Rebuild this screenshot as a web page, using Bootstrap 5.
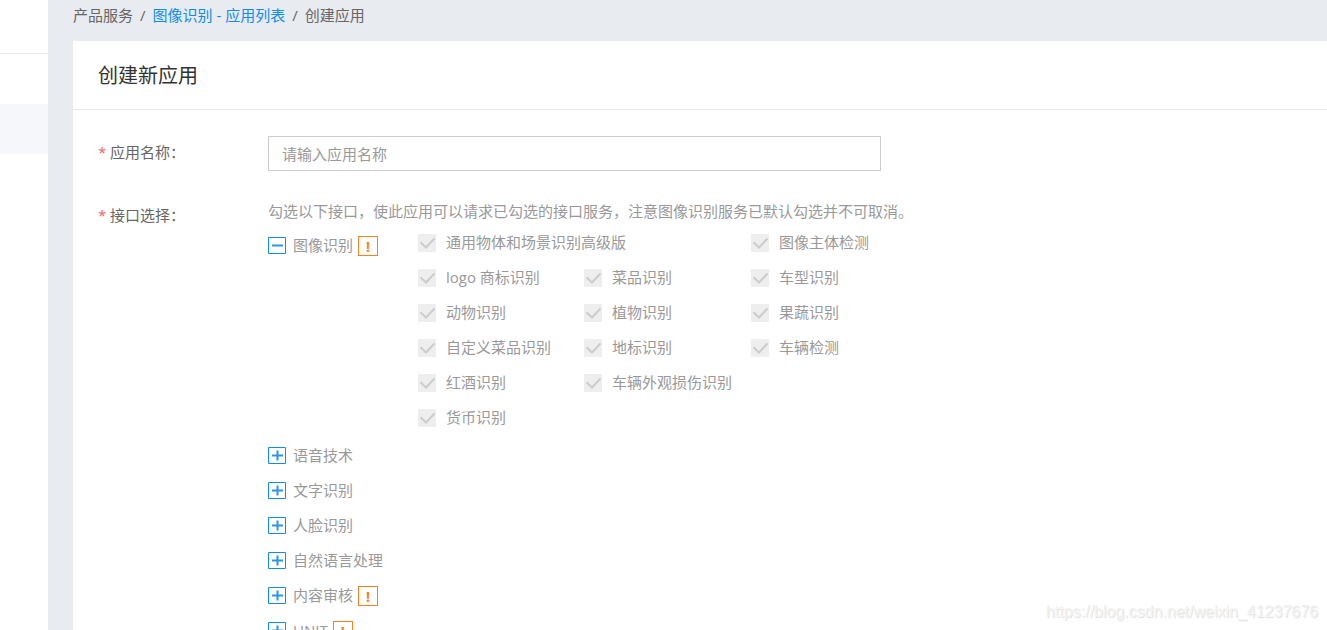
<!DOCTYPE html>
<html lang="zh-CN">
<head>
<meta charset="utf-8">
<meta name="viewport" content="width=device-width, initial-scale=1">
<title>创建新应用</title>
<link rel="stylesheet" href="https://cdn.jsdelivr.net/npm/bootstrap@5.3.0/dist/css/bootstrap.min.css">
<style>
body { background: #e8ebf0; color: #999; font-family: "Open Sans", "Noto Sans CJK SC", sans-serif; font-size: 15px; line-height: 30px; }
.shell { height: 100vh; }
.side-nav { width: 48px; }
.side-nav .side-logo { height: 54px; border-bottom: 1px solid #e8e8e8; }
.side-nav .side-item { height: 50px; }
.side-nav .side-item.active { background: #f6f7fb; }
.crumbs { --bs-breadcrumb-divider-color: #666; --bs-breadcrumb-item-padding-x: 7px; --bs-breadcrumb-item-active-color: #666; color: #666; height: 41px; }
.crumbs a { color: #108cee; text-decoration: none; }
.main-area { padding-left: 25px; }
.panel-title { font-size: 20px; line-height: 66px; font-weight: 400; color: #333; padding: 2px 25px 0; border-bottom: 1px solid #e8e8e8; }
.panel-form { padding: 26px 25px; }
.field-label { width: 170px; color: #666; line-height: 32px; }
.field-label .star { color: #f0616a; width: 12px; }
.name-input { width: 613px; height: 35px; padding: 0 13px; font-size: 15px; line-height: 33px; border: 1px solid #ccc; }
.name-input::placeholder { color: #999; }
.hint-text { line-height: 32px; }
.group-row { min-height: 35px; }
.group-head { width: 150px; height: 35px; }
.toggle-btn { width: 18px; height: 17px; margin: 2px 7px 0 0; }
.toggle-btn svg { display: block; }
.new-flag { width: 20px; height: 20px; margin: 2px 0 0 5px; border: 1px solid #f58220; color: #f58220; font: 700 14px/20px "Open Sans", sans-serif; text-align: center; }
.api-grid { display: grid; grid-template-columns: 166px 167px 167px; grid-auto-rows: 35px; }
.api-grid .form-check { min-height: 0; padding: 0; margin: 0; height: 30px; white-space: nowrap; }
.api-grid .wide-item { grid-column: span 2; }
.api-grid .form-check-input { width: 18px; height: 18px; margin: 2px 10px 0 0; float: none; border: 0; border-radius: 0; }
.api-grid .form-check-input:disabled,
.api-grid .form-check-input:disabled ~ .form-check-label { opacity: 1; }
.api-grid .form-check-input:checked { background-color: #eee; background-size: 18px 18px;
  background-image: url("data:image/svg+xml,%3csvg xmlns='http://www.w3.org/2000/svg' viewBox='0 0 18 18'%3e%3cpath d='M2.5 8.2 8 13.5 16.5 4.5' fill='none' stroke='%23ccc' stroke-width='2'/%3e%3c/svg%3e"); }
.watermark { right: 9px; bottom: 8px; font: 400 16px/20px "Liberation Sans", sans-serif; color: #f4f4f4; text-shadow: 1px 1px 1px #ddd; }
</style>
</head>
<body>
<svg class="d-none" aria-hidden="true">
  <symbol id="plus" viewBox="0 0 18 17"><path d="M.5.5h17v16H.5z" fill="none" stroke="#108cee"/><path d="M4 8.5h11M9.5 3.5v10" stroke="#2b95e9" stroke-width="2"/></symbol>
  <symbol id="minus" viewBox="0 0 18 17"><path d="M.5.5h17v16H.5z" fill="none" stroke="#108cee"/><path d="M4 8.5h11" stroke="#2b95e9" stroke-width="2"/></symbol>
</svg>
<div class="shell d-flex overflow-hidden position-relative">
  <aside class="side-nav bg-white flex-shrink-0">
    <div class="side-logo"></div>
    <div class="side-item"></div>
    <div class="side-item active"></div>
  </aside>
  <main class="main-area d-flex flex-column flex-grow-1">
    <nav aria-label="breadcrumb">
      <ol class="breadcrumb crumbs mb-0">
        <li class="breadcrumb-item">产品服务</li>
        <li class="breadcrumb-item"><a href="#">图像识别 - 应用列表</a></li>
        <li class="breadcrumb-item active" aria-current="page">创建应用</li>
      </ol>
    </nav>
    <section class="bg-white flex-grow-1">
      <h1 class="panel-title mb-0">创建新应用</h1>
      <form class="panel-form">
        <div class="d-flex mb-4">
          <label class="field-label d-flex flex-shrink-0" for="appName"><span class="star">*</span>应用名称：</label>
          <input type="text" class="form-control rounded-0 name-input" id="appName" placeholder="请输入应用名称">
        </div>
        <div class="d-flex">
          <div class="field-label d-flex flex-shrink-0 pt-1" id="apiLabel"><span class="star">*</span>接口选择：</div>
          <div role="group" aria-labelledby="apiLabel">
            <p class="hint-text mb-0">勾选以下接口，使此应用可以请求已勾选的接口服务，注意图像识别服务已默认勾选并不可取消。</p>
            <div class="group-row d-flex">
              <div class="group-head d-flex align-items-center flex-shrink-0">
                <button type="button" class="btn p-0 border-0 rounded-0 toggle-btn" aria-label="收起图像识别"><svg width="18" height="17"><use href="#minus"/></svg></button>图像识别<span class="new-flag">!</span>
              </div>
              <div class="api-grid">
                <div class="form-check d-flex align-items-center wide-item"><input class="form-check-input" type="checkbox" id="a1" checked disabled><label class="form-check-label" for="a1">通用物体和场景识别高级版</label></div>
                <div class="form-check d-flex align-items-center"><input class="form-check-input" type="checkbox" id="a2" checked disabled><label class="form-check-label" for="a2">图像主体检测</label></div>
                <div class="form-check d-flex align-items-center"><input class="form-check-input" type="checkbox" id="a3" checked disabled><label class="form-check-label" for="a3">logo 商标识别</label></div>
                <div class="form-check d-flex align-items-center"><input class="form-check-input" type="checkbox" id="a4" checked disabled><label class="form-check-label" for="a4">菜品识别</label></div>
                <div class="form-check d-flex align-items-center"><input class="form-check-input" type="checkbox" id="a5" checked disabled><label class="form-check-label" for="a5">车型识别</label></div>
                <div class="form-check d-flex align-items-center"><input class="form-check-input" type="checkbox" id="a6" checked disabled><label class="form-check-label" for="a6">动物识别</label></div>
                <div class="form-check d-flex align-items-center"><input class="form-check-input" type="checkbox" id="a7" checked disabled><label class="form-check-label" for="a7">植物识别</label></div>
                <div class="form-check d-flex align-items-center"><input class="form-check-input" type="checkbox" id="a8" checked disabled><label class="form-check-label" for="a8">果蔬识别</label></div>
                <div class="form-check d-flex align-items-center"><input class="form-check-input" type="checkbox" id="a9" checked disabled><label class="form-check-label" for="a9">自定义菜品识别</label></div>
                <div class="form-check d-flex align-items-center"><input class="form-check-input" type="checkbox" id="a10" checked disabled><label class="form-check-label" for="a10">地标识别</label></div>
                <div class="form-check d-flex align-items-center"><input class="form-check-input" type="checkbox" id="a11" checked disabled><label class="form-check-label" for="a11">车辆检测</label></div>
                <div class="form-check d-flex align-items-center"><input class="form-check-input" type="checkbox" id="a12" checked disabled><label class="form-check-label" for="a12">红酒识别</label></div>
                <div class="form-check d-flex align-items-center wide-item"><input class="form-check-input" type="checkbox" id="a13" checked disabled><label class="form-check-label" for="a13">车辆外观损伤识别</label></div>
                <div class="form-check d-flex align-items-center"><input class="form-check-input" type="checkbox" id="a14" checked disabled><label class="form-check-label" for="a14">货币识别</label></div>
              </div>
            </div>
            <div class="group-head d-flex align-items-center"><button type="button" class="btn p-0 border-0 rounded-0 toggle-btn" aria-label="展开语音技术"><svg width="18" height="17"><use href="#plus"/></svg></button>语音技术</div>
            <div class="group-head d-flex align-items-center"><button type="button" class="btn p-0 border-0 rounded-0 toggle-btn" aria-label="展开文字识别"><svg width="18" height="17"><use href="#plus"/></svg></button>文字识别</div>
            <div class="group-head d-flex align-items-center"><button type="button" class="btn p-0 border-0 rounded-0 toggle-btn" aria-label="展开人脸识别"><svg width="18" height="17"><use href="#plus"/></svg></button>人脸识别</div>
            <div class="group-head d-flex align-items-center"><button type="button" class="btn p-0 border-0 rounded-0 toggle-btn" aria-label="展开自然语言处理"><svg width="18" height="17"><use href="#plus"/></svg></button>自然语言处理</div>
            <div class="group-head d-flex align-items-center"><button type="button" class="btn p-0 border-0 rounded-0 toggle-btn" aria-label="展开内容审核"><svg width="18" height="17"><use href="#plus"/></svg></button>内容审核<span class="new-flag">!</span></div>
            <div class="group-head d-flex align-items-center"><button type="button" class="btn p-0 border-0 rounded-0 toggle-btn" aria-label="展开 UNIT"><svg width="18" height="17"><use href="#plus"/></svg></button>UNIT<span class="new-flag">!</span></div>
          </div>
        </div>
      </form>
    </section>
  </main>
  <div class="watermark position-absolute">https://blog.csdn.net/weixin_41237676</div>
</div>
<script src="https://cdn.jsdelivr.net/npm/bootstrap@5.3.0/dist/js/bootstrap.bundle.min.js"></script>
</body>
</html>
